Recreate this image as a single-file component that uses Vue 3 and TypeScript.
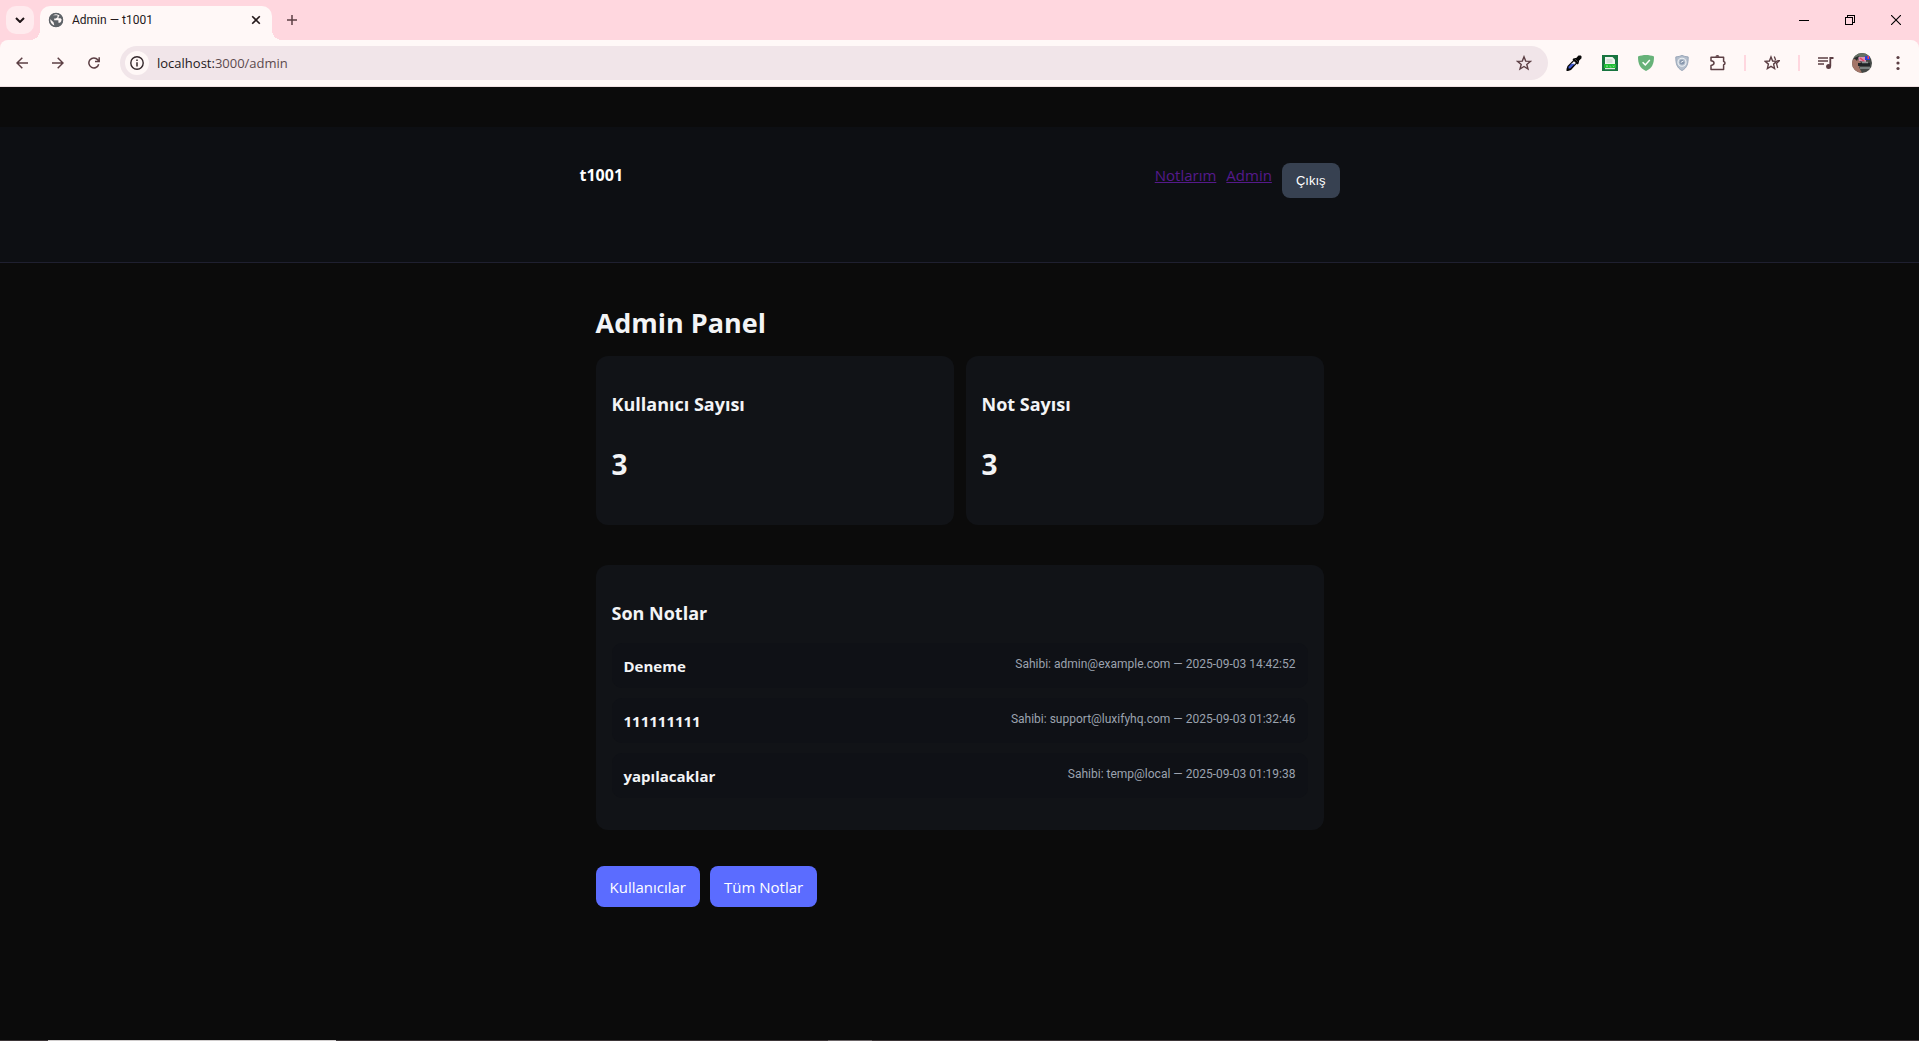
<script setup lang="ts">
interface Stat { label: string; value: number }
interface Note { title: string; owner: string; date: string }

const stats: Stat[] = [
  { label: 'Kullanıcı Sayısı', value: 3 },
  { label: 'Not Sayısı', value: 3 },
]
const notes: Note[] = [
  { title: 'Deneme', owner: 'admin@example.com', date: '2025-09-03 14:42:52' },
  { title: '111111111', owner: 'support@luxifyhq.com', date: '2025-09-03 01:32:46' },
  { title: 'yapılacaklar', owner: 'temp@local', date: '2025-09-03 01:19:38' },
]
</script>

<template>
  <div class="window">
    <div class="tabstrip">
      <button class="tab-search" aria-label="Search tabs">
        <svg width="10" height="6" viewBox="0 0 10 6"><path d="M1 1l4 4 4-4" fill="none" stroke="#1f1517" stroke-width="2" /></svg>
      </button>
      <div class="tab">
        <svg width="16" height="16" viewBox="0 0 16 16">
          <circle cx="8" cy="8" r="7" fill="#5f6368" />
          <path d="M2 7l3.500 3.200.9 3.600H4.800C2.800 12.500 1.700 10 2 7zM5 3.200h4.500v2L7.800 6.500H6.200v1.700h4.200v2.600h1.600l1.200-1.200.8-2.100-1.500-1.200h-2V4.800l1.500-1.200L9 1.800 6.500 2z" fill="#fff8f7" />
          <circle cx="8" cy="8" r="6.500" fill="none" stroke="#5f6368" stroke-width="1.500" />
        </svg>
        <span class="tab-title">Admin — t1001</span>
        <button class="plain" aria-label="Close tab">
          <svg width="10" height="10" viewBox="0 0 10 10"><path d="M1.200 1.200l7.600 7.600M8.800 1.200L1.200 8.800" stroke="#24191b" stroke-width="1.600" /></svg>
        </button>
      </div>
      <button class="plain new-tab" aria-label="New tab">
        <svg width="10" height="10" viewBox="0 0 10 10"><path d="M5 0v10M0 5h10" stroke="#5c3f44" stroke-width="1.500" /></svg>
      </button>
      <div class="win-controls">
        <button class="plain" aria-label="Minimize"><svg width="10" height="10" viewBox="0 0 10 10" shape-rendering="crispEdges"><path d="M0 5.500h10" stroke="#000" /></svg></button>
        <button class="plain" aria-label="Restore"><svg width="10" height="10" viewBox="0 0 10 10" shape-rendering="crispEdges"><path d="M.5 2.500h7v7h-7zM2.500 2.500v-2h7v7h-2" fill="none" stroke="#000" /></svg></button>
        <button class="plain" aria-label="Close"><svg width="10" height="10" viewBox="0 0 10 10"><path d="M0 0l10 10M10 0L0 10" stroke="#000" stroke-width="1.100" /></svg></button>
      </div>
    </div>

    <div class="toolbar">
      <div class="nav">
        <button class="plain" aria-label="Back"><svg width="12" height="12" viewBox="0 0 12 12"><path d="M12 6H1M6.300.7L1 6l5.300 5.300" fill="none" stroke="#5c3f44" stroke-width="1.500" /></svg></button>
        <button class="plain" aria-label="Forward"><svg width="12" height="12" viewBox="0 0 12 12"><path d="M0 6h11M5.700.7L11 6l-5.300 5.300" fill="none" stroke="#5c3f44" stroke-width="1.500" /></svg></button>
        <button class="plain" aria-label="Reload"><svg width="12" height="12" viewBox="0 0 12 12"><path d="M10.700 7.200A5 5 0 1 1 9.800 2.800L11 4.200M11.200.3v4.200H7" fill="none" stroke="#5c3f44" stroke-width="1.500" /></svg></button>
      </div>
      <div class="omnibox">
        <button class="plain site-info" aria-label="Site information">
          <svg width="14" height="14" viewBox="0 0 14 14"><circle cx="7" cy="7" r="6.200" fill="none" stroke="#34282b" stroke-width="1.400" /><path d="M7 6.200v4.200M7 3.600v1.500" stroke="#34282b" stroke-width="1.500" /></svg>
        </button>
        <span class="url"><b>localhost:</b>3000/admin</span>
        <button class="plain" aria-label="Bookmark">
          <svg width="16" height="16" viewBox="0 0 16 16"><path d="M8 1.800l1.700 4.300 4.800.3-3.700 3 1.200 4.600L8 11.500 4 14l1.200-4.600-3.700-3 4.800-.3z" fill="none" stroke="#5c3f44" stroke-width="1.400" /></svg>
        </button>
      </div>
      <div class="extensions">
        <button class="plain" aria-label="Color picker">
          <svg width="16" height="16" viewBox="0 0 16 16"><path d="M8 3l5 5-1.500 1.500-.8-.8L5 15l-3 1H.5V14L1.500 11l5.700-5.700L6.500 4.500z" fill="#070707" /><path d="M8 2.900L10.200 3 12.500.5h2.200l.8.8v2L13 5.800V8z" fill="#070707" /><path d="M8 6.200l1.900 1.900-1.500 1.500H4.600z" fill="#fff" /><path d="M5.400 8.800h3.500L4.200 13.500H2.500v-1.800z" fill="#405bd4" /></svg>
        </button>
        <button class="plain" aria-label="Sheet export">
          <svg width="16" height="16" viewBox="0 0 16 16"><path d="M0 0h16v16H0z" fill="#18743f" /><path d="M3 2h7.500L13 4.500V9H3z" fill="#eef3ee" /><path d="M4.500 5h6M4.500 7h6" stroke="#bdc9c1" /><path d="M2 9h12v4H2z" fill="#1fbd34" /><path d="M4 10.500l2 1.500m0-1.500L4 12m4-1.500V12h1.500m1.300-1.500l1.500 1.500m0-1.500L10.800 12" stroke="#8ce493" stroke-width=".7" fill="none" /><path d="M3 13h10v1.200H3z" fill="#dcebdd" /></svg>
        </button>
        <button class="plain" aria-label="Ad blocker">
          <svg width="16" height="16" viewBox="0 0 16 16"><path d="M8 0c2.800 0 5.500.5 8 1.500 0 7-1.500 11.500-8 14.500C1.500 13 0 8.500 0 1.500 2.500.5 5.200 0 8 0z" fill="#67b279" /><path d="M4.600 7.300l2.700 2.600L11.800 5" fill="none" stroke="#fff" stroke-width="1.500" /></svg>
        </button>
        <button class="plain" aria-label="Privacy">
          <svg width="16" height="16" viewBox="0 0 16 16"><path d="M8 .4c1.800.9 3.900 1.400 6.200 1.500.1 6.200-.8 10.800-6.200 13.700C2.600 12.700 1.700 8.100 1.800 1.900 4.100 1.800 6.200 1.300 8 .4z" fill="#b4becc" stroke="#93a1b4" stroke-width=".9" /><circle cx="8" cy="7.200" r="4" fill="none" stroke="#edf1f5" stroke-width="1.100" /><circle cx="8" cy="7.200" r="2.400" fill="#8797ad" /><path d="M6.800 7.500l2.800-1.600" stroke="#f2f5f8" /></svg>
        </button>
        <button class="plain" aria-label="Extensions">
          <svg width="16" height="16" viewBox="0 0 16 16"><path d="M1 2.300h12.600v4.200c.8.100 1.400.7 1.400 1.600s-.6 1.500-1.400 1.600v4.900H1v-4.200c2-.2 3-1 3-2.300S3 6 1 5.800z" fill="none" stroke="#5c3f44" stroke-width="1.500" stroke-linejoin="round" /><path d="M5.400 1.700a2 1.700 0 0 1 4 0z" fill="#5c3f44" /></svg>
        </button>
        <i class="divider"></i>
        <button class="plain" aria-label="Bookmarks">
          <svg width="16" height="16" viewBox="0 0 16 16"><path d="M7 2l1.600 4 4.200.3-3.200 2.800 1 4.400L7 11.300l-3.600 2.200 1-4.400L1.200 6.300 5.400 6z" fill="none" stroke="#5c3f44" stroke-width="1.400" /><path d="M10.300 1.500L11.600 5M13.300 5.600h2.200l-3 2.800 1.200 4.600" fill="none" stroke="#5c3f44" stroke-width="1.300" /></svg>
        </button>
        <i class="divider"></i>
        <button class="plain" aria-label="Media control">
          <svg width="16" height="14" viewBox="0 0 16 14"><path d="M0 2h10M0 5h10M0 8h6" stroke="#5c3f44" stroke-width="1.600" /><path d="M15.500 2h-3.200v8" fill="none" stroke="#5c3f44" stroke-width="1.800" /><circle cx="10.600" cy="10.600" r="2.500" fill="#5c3f44" /></svg>
        </button>
        <button class="plain profile" aria-label="Profile">
          <svg width="20" height="20" viewBox="0 0 20 20"><defs><clipPath id="avatar"><circle cx="10" cy="10" r="10" /></clipPath></defs><g clip-path="url(#avatar)"><path d="M0 0h20v20H0z" fill="#454846" /><path d="M0 0h20v5H0z" fill="#647064" /><path d="M0 7l5-2 4 5-2 4 3 6H0z" fill="#a47568" /><path d="M6 4h8v5L7 8z" fill="#d992b4" /><path d="M8 5l4 3" stroke="#e94761" stroke-width="1.500" /><path d="M13 3h5v4h-5z" fill="#293ed9" /><path d="M15.500 3h1.500v3h-1.500z" fill="#f04254" /><path d="M6 10h12v3H6z" fill="#202426" /><path d="M10 9.500h6M8 15h10" stroke="#8b9392" stroke-width="1.500" /><path d="M2 5l5-2-2 5z" fill="#292b2b" /></g></svg>
        </button>
        <button class="plain" aria-label="Menu">
          <svg width="4" height="16" viewBox="0 0 4 16" fill="#5c3f44"><circle cx="2" cy="2.500" r="1.600" /><circle cx="2" cy="8" r="1.600" /><circle cx="2" cy="13.500" r="1.600" /></svg>
        </button>
      </div>
    </div>

    <div class="page">
      <header class="site-header">
        <div class="header-inner">
          <strong class="brand">t1001</strong>
          <nav class="links">
            <a href="#notlarim">Notlarım</a>
            <a href="#admin">Admin</a>
            <button class="logout">Çıkış</button>
          </nav>
        </div>
      </header>
      <main class="content">
        <h1>Admin Panel</h1>
        <div class="stats">
          <section v-for="s in stats" :key="s.label" class="card">
            <h3>{{ s.label }}</h3>
            <p class="value">{{ s.value }}</p>
          </section>
        </div>
        <section class="card recent">
          <h3>Son Notlar</h3>
          <ul>
            <li v-for="n in notes" :key="n.title">
              <strong>{{ n.title }}</strong>
              <span class="meta">Sahibi: {{ n.owner }} — {{ n.date }}</span>
            </li>
          </ul>
        </section>
        <div class="actions">
          <a href="#kullanicilar">Kullanıcılar</a>
          <a href="#notlar">Tüm Notlar</a>
        </div>
      </main>
    </div>
    <div class="taskbar"><i class="active"></i><i class="rest"></i><i class="idle"></i></div>
  </div>
</template>

<style>
body { margin: 0; background: #0b0b0b; }
</style>

<style scoped>
* { box-sizing: border-box; }
.window {
  min-height: 100vh;
  display: flex;
  flex-direction: column;
  font-family: "Open Sans", "Noto Sans", sans-serif;
  background: #0b0b0b;
}
button { font-family: inherit; cursor: pointer; }
svg { display: block; flex: none; }
.plain {
  display: flex;
  align-items: center;
  justify-content: center;
  padding: 0;
  border: 0;
  background: none;
}

/* Browser chrome */
.tabstrip { position: relative; z-index: 1; display: flex; height: 40px; background: #ffd7df; }
.tab-search {
  display: flex;
  align-items: center;
  justify-content: center;
  width: 28px;
  height: 28px;
  margin: 6px;
  padding: 0;
  border: 0;
  border-radius: 10px;
  background: #ffebee;
}
.tab {
  position: relative;
  display: flex;
  align-items: center;
  width: 232px;
  height: 34px;
  margin-top: 6px;
  padding: 0 11px 6px 8px;
  border-radius: 10px 10px 0 0;
  background: #fff8f7;
}
.tab::before,
.tab::after {
  content: "";
  position: absolute;
  bottom: 0;
  width: 10px;
  height: 10px;
}
.tab::before { right: 100%; background: radial-gradient(circle at 0 0, transparent 10px, #fff8f7 10px); }
.tab::after { left: 100%; background: radial-gradient(circle at 100% 0, transparent 10px, #fff8f7 10px); }
.tab-title,
.meta { font-family: Roboto, "Open Sans", sans-serif; font-size: 12px; }
.tab-title { flex: 1; margin-left: 8px; line-height: 16px; color: #24191b; }
.new-tab { width: 28px; height: 28px; margin: 6px; }
.win-controls { display: flex; height: 40px; margin-left: auto; }
.win-controls button { width: 46px; }
.toolbar {
  display: flex;
  align-items: center;
  height: 47px;
  padding: 0 19px 1px 16px;
  border-bottom: 1px solid #eedfe1;
  border-radius: 8px 8px 0 0;
  background: #fff8f7;
  box-shadow: 0 -8px 0 #ffd7df;
}
.nav { display: flex; gap: 24px; margin-right: 20px; }
.omnibox {
  display: flex;
  align-items: center;
  flex: 1;
  height: 34px;
  padding: 0 16px 0 5px;
  border-radius: 17px;
  background: #f1e5e9;
}
.site-info { width: 24px; height: 24px; border-radius: 12px; background: #fff8f7; }
.url { flex: 1; margin-left: 8px; font-size: 13px; line-height: 20px; color: #5c4a4e; }
.url b { font-weight: 400; color: #24191b; }
.extensions { display: flex; align-items: center; gap: 20px; margin-left: 18px; }
.divider { width: 2px; height: 16px; margin: 0 -2px; background: #ffd7df; }
.extensions .profile { margin: 0 4px 0 -2px; }

/* Page */
.page { flex: 1; padding-top: 40px; color: #f3f4f6; }
.site-header { padding: 36px 0 64px; border-bottom: 1px solid #1f2030; background: #0d0f13; }
.header-inner { display: flex; justify-content: space-between; max-width: 760px; margin: 0 auto; }
.brand { font-size: 16px; line-height: 24px; color: #fff; }
.links { display: flex; align-items: flex-start; gap: 10px; }
.links a { font-size: 15px; line-height: 24px; color: #551a8b; }
.logout {
  height: 35px;
  padding: 0 14px;
  border: 0;
  border-radius: 8px;
  background: #374151;
  color: #fff;
  font-family: "Liberation Sans", Arial, sans-serif;
  font-size: 13px;
}
.content { max-width: 760px; margin: 0 auto; padding: 40px 16px; }
h1 { margin: 0 0 13px; font-size: 27px; line-height: 40px; font-weight: 700; }
.stats { display: flex; gap: 12px; }
.card { flex: 1; padding: 36px 16px; border-radius: 12px; background: #111317; }
h3 { margin: 0; font-size: 18px; line-height: 24px; font-weight: 700; }
.value { margin: 28px 0 5px; font-size: 28px; line-height: 40px; font-weight: 700; }
.recent { margin-top: 40px; padding-bottom: 32px; }
ul { display: flex; flex-direction: column; gap: 10px; margin: 18px 0 0; padding: 0; list-style: none; }
li {
  display: flex;
  align-items: flex-start;
  justify-content: space-between;
  padding: 11px 12px 10px;
  border-radius: 10px;
  background: #0f1116;
}
li strong { font-size: 15px; line-height: 24px; }
.meta { line-height: 20px; color: #9ca3af; }
.actions { display: flex; gap: 10px; margin-top: 36px; }
.actions a {
  padding: 9px 14px 8px;
  border-radius: 8px;
  background: #5b6cff;
  color: #fff;
  font-size: 15px;
  line-height: 24px;
  text-decoration: none;
}

/* Top edge of the desktop taskbar */
.taskbar { display: flex; height: 1px; background: #3b3537; }
.taskbar .active { width: 15%; margin-left: 48px; background: #d0cdcd; }
.taskbar .rest { width: 492px; }
.taskbar .idle { width: 44px; background: #6b6567; }
</style>
